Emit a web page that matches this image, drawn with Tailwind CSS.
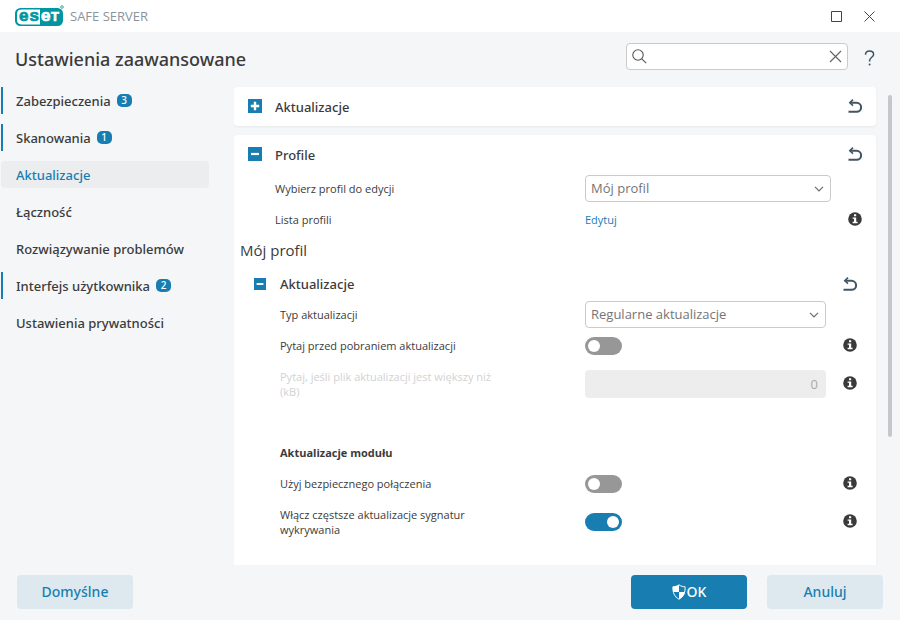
<!DOCTYPE html>
<html lang="pl">

<head>
    <meta charset="UTF-8">
    <meta name="viewport" content="width=device-width, initial-scale=1.0">
    <title>Ustawienia zaawansowane</title>
    <script src="https://cdn.jsdelivr.net/npm/@tailwindcss/browser@4"></script>
</head>

<body class="flex h-screen flex-col overflow-hidden bg-[#f4f6f8] font-['Open_Sans','Noto_Sans',sans-serif] text-[11px] text-[#3b3b3b]">
    <!-- Shared icons -->
    <svg class="hidden">
        <symbol id="icon-undo" viewBox="0 0 14 14">
            <path d="M2 3.8H8.6A4.5 4.5 0 0 1 8.6 12.8H.5" fill="none" stroke="#425563" stroke-width="2" />
            <path d="M5 .6 1.8 3.8 5 6.6" fill="none" stroke="#425563" stroke-width="1.6" />
        </symbol>
        <symbol id="icon-info" viewBox="0 0 14 14">
            <circle cx="7" cy="7" r="6.8" fill="#3a3a3a" />
            <path d="M6 2.2h2.2v2H6zM4.6 5.4h3.6v4.4h1.4v1.4H4.6V9.8H6V6.8H4.6z" fill="#fff" />
        </symbol>
        <symbol id="icon-minus" viewBox="0 0 14 14">
            <path d="M0 0h14v14H0z" fill="#187eb1" />
            <path d="M3 7h8" stroke="#fff" stroke-width="2.2" />
        </symbol>
        <symbol id="icon-plus" viewBox="0 0 14 14">
            <path d="M0 0h14v14H0z" fill="#187eb1" />
            <path d="M2.8 7h8.4M7 2.8v8.4" stroke="#fff" stroke-width="2.4" />
        </symbol>
        <symbol id="icon-chevron" viewBox="0 0 10 6">
            <path d="M1 .8 5 4.8 9 .8" fill="none" stroke="#6a6a6a" stroke-width="1.2" />
        </symbol>
    </svg>

    <!-- Title bar -->
    <div class="flex h-8 shrink-0 items-center bg-white pl-[14px] pr-[25px]">
        <svg class="h-[22px] w-[52px]" viewBox="0 0 52 22">
            <rect x="1" y="3" width="48" height="18" rx="5.5" fill="#0096a1" />
            <path d="M26 4.6H7.5Q3 4.6 3 9v6q0 4.4 4.5 4.4H26z" fill="#fff" />
            <g font-family="Liberation Sans" font-weight="700" font-size="17" stroke-width=".7">
                <text x="5" y="16.4" fill="#0096a1" stroke="#0096a1">e</text>
                <text x="15.5" y="16.4" fill="#0096a1" stroke="#0096a1">s</text>
                <text x="27" y="16.4" fill="#fff" stroke="#fff">e</text>
                <text x="37" y="16.4" font-size="13" fill="#fff" stroke="#fff">T</text>
            </g>
            <circle cx="48" cy="2" r="1.3" fill="none" stroke="#0096a1" stroke-width=".8" />
        </svg>
        <span class="ml-1 pt-0.5 text-[13px] text-[#8a949c]">SAFE SERVER</span>
        <button type="button" aria-label="Maksymalizuj" class="ml-auto">
            <svg class="size-[11px]" viewBox="0 0 11 11"><path d="M.5 .5h10v10H.5z" fill="none" stroke="#444" /></svg>
        </button>
        <button type="button" aria-label="Zamknij" class="ml-[22px]">
            <svg class="size-[11px]" viewBox="0 0 11 11"><path d="M.5 .5l10 10M10.5 .5l-10 10" fill="none" stroke="#444" /></svg>
        </button>
    </div>

    <!-- Page heading and search -->
    <header class="flex h-[55px] shrink-0 items-center pl-[15px] pr-[25px]">
        <h1 class="mb-0.5 font-['Noto_Sans',sans-serif] text-lg font-medium">Ustawienia zaawansowane</h1>
        <div class="mb-[7px] ml-auto flex h-[27px] w-[222px] items-center rounded border border-[#c8cacc] bg-white px-[5px]">
            <svg class="size-[15px] shrink-0" viewBox="0 0 15 15">
                <circle cx="6" cy="6" r="5.2" fill="none" stroke="#555" stroke-width="1.1" />
                <path d="M9.8 9.8l4.4 4.4" stroke="#555" stroke-width="1.1" />
            </svg>
            <input type="text" aria-label="Szukaj" class="min-w-0 flex-1 px-2 text-[13px] outline-none">
            <button type="button" aria-label="Wyczyść">
                <svg class="size-[13px]" viewBox="0 0 13 13"><path d="M1 1l11 11M12 1L1 12" stroke="#666" stroke-width="1.2" /></svg>
            </button>
        </div>
        <button type="button" aria-label="Pomoc" class="mb-1 ml-4">
            <svg class="h-4 w-[11px]" viewBox="0 0 11 16">
                <path d="M1.5 4.8C1.5 2.4 3.1 1 5.5 1S9.6 2.4 9.6 4.4C9.6 7.2 5.6 7.4 5.6 10.6V11.4" fill="none" stroke="#425563" stroke-width="1.5" />
                <circle cx="5.6" cy="14.6" r="1" fill="#425563" />
            </svg>
        </button>
    </header>

    <div class="flex min-h-0 flex-1">
        <!-- Navigation -->
        <nav class="flex w-[234px] shrink-0 flex-col gap-[10px] pl-px pr-[25px] font-['Noto_Sans',sans-serif] text-[13px] font-medium">
            <a href="#" class="flex h-[27px] items-center gap-[6px] border-l-2 border-[#187eb1] pl-[13px] pt-0.5">Zabezpieczenia <span class="mb-0.5 flex h-[13px] w-[15px] items-center justify-center rounded-[5px] bg-[#187eb1] text-[10px] text-white">3</span></a>
            <a href="#" class="flex h-[27px] items-center gap-[6px] border-l-2 border-[#187eb1] pl-[13px] pt-0.5">Skanowania <span class="mb-0.5 flex h-[13px] w-[15px] items-center justify-center rounded-[5px] bg-[#187eb1] text-[10px] text-white">1</span></a>
            <a href="#" class="flex h-[27px] items-center rounded bg-[#ebedef] pl-[15px] pt-0.5 text-[#187eb1]">Aktualizacje</a>
            <a href="#" class="flex h-[27px] items-center pl-[15px] pt-0.5">Łączność</a>
            <a href="#" class="flex h-[27px] items-center pl-[15px] pt-0.5">Rozwiązywanie problemów</a>
            <a href="#" class="flex h-[27px] items-center gap-[6px] border-l-2 border-[#187eb1] pl-[13px] pt-0.5">Interfejs użytkownika <span class="mb-0.5 flex h-[13px] w-[15px] items-center justify-center rounded-[5px] bg-[#187eb1] text-[10px] text-white">2</span></a>
            <a href="#" class="flex h-[27px] items-center pl-[15px] pt-0.5">Ustawienia prywatności</a>
        </nav>

        <!-- Settings -->
        <main class="flex min-w-0 flex-1 flex-col gap-[9px] overflow-hidden pr-3">
            <section class="grid h-[39px] shrink-0 grid-cols-[27px_1fr_auto] items-center rounded bg-white px-[14px] shadow-sm shadow-black/5">
                <button type="button" aria-label="Rozwiń" class="mb-0.5"><svg class="size-[14px]"><use href="#icon-plus" /></svg></button>
                <h2 class="pt-0.5 font-['Noto_Sans',sans-serif] text-[13px] font-medium">Aktualizacje</h2>
                <button type="button" aria-label="Przywróć" class="mb-0.5"><svg class="size-[14px]"><use href="#icon-undo" /></svg></button>
            </section>

            <section class="flex-1 rounded-t bg-white leading-[15px] shadow-sm shadow-black/5">
                <div class="grid grid-cols-[27px_310px_1fr_31px] items-center px-[14px]">
                    <button type="button" aria-label="Zwiń" class="h-[38px]"><svg class="size-[14px]"><use href="#icon-minus" /></svg></button>
                    <h2 class="col-span-2 pt-0.5 font-['Noto_Sans',sans-serif] text-[13px] font-medium">Profile</h2>
                    <button type="button" aria-label="Przywróć" class="justify-self-end"><svg class="size-[14px]"><use href="#icon-undo" /></svg></button>

                    <label for="profile" class="col-start-2">Wybierz profil do edycji</label>
                    <div class="relative flex h-[31px] items-center">
                        <select id="profile" class="h-[27px] w-full appearance-none rounded border border-[#c8cacc] bg-white px-[5px] text-[13px] text-[#757575]">
                            <option>Mój profil</option>
                        </select>
                        <svg class="pointer-events-none absolute right-[7px] h-[6px] w-[10px]"><use href="#icon-chevron" /></svg>
                    </div>

                    <span class="col-start-2">Lista profili</span>
                    <a href="#" class="flex h-[31px] items-center text-[#187eb1]">Edytuj</a>
                    <button type="button" aria-label="Informacje" class="mb-0.5 justify-self-end"><svg class="size-[14px]"><use href="#icon-info" /></svg></button>
                </div>

                <h3 class="flex h-[33px] items-center pb-0.5 pl-[6px] text-[15px]">Mój profil</h3>

                <div class="grid grid-cols-[26px_305px_1fr_31px] items-center pl-5 pr-[19px]">
                    <button type="button" aria-label="Zwiń" class="h-[31px]"><svg class="size-3"><use href="#icon-minus" /></svg></button>
                    <h4 class="col-span-2 pt-0.5 font-['Noto_Sans',sans-serif] text-[13px] font-medium">Aktualizacje</h4>
                    <button type="button" aria-label="Przywróć" class="justify-self-end"><svg class="size-[14px]"><use href="#icon-undo" /></svg></button>

                    <label for="update-type" class="col-start-2">Typ aktualizacji</label>
                    <div class="relative flex h-[31px] items-center">
                        <select id="update-type" class="h-[27px] w-full appearance-none rounded border border-[#c8cacc] bg-white px-[5px] text-[13px] text-[#757575]">
                            <option>Regularne aktualizacje</option>
                        </select>
                        <svg class="pointer-events-none absolute right-[7px] h-[6px] w-[10px]"><use href="#icon-chevron" /></svg>
                    </div>

                    <label for="ask" class="col-start-2 flex h-[31px] items-center">Pytaj przed pobraniem aktualizacji</label>
                    <input id="ask" type="checkbox" class="flex h-[18px] w-[37px] appearance-none items-center rounded-full bg-[#979797] px-[3px] before:size-3 before:rounded-full before:bg-white checked:justify-end checked:bg-[#187eb1]">
                    <button type="button" aria-label="Informacje" class="mb-0.5 justify-self-end"><svg class="size-[14px]"><use href="#icon-info" /></svg></button>

                    <label for="ask-size" class="col-start-2 flex h-[46px] max-w-[225px] items-center text-[#d2d2d2]">Pytaj, jeśli plik aktualizacji jest większy niż (kB)</label>
                    <input id="ask-size" type="text" value="0" disabled class="h-7 w-full rounded bg-[#ededed] px-2 text-right text-[13px] text-[#a9a9a9]">
                    <button type="button" aria-label="Informacje" class="mb-0.5 justify-self-end"><svg class="size-[14px]"><use href="#icon-info" /></svg></button>

                    <h5 class="col-span-2 col-start-2 mt-[30px] flex h-[31px] items-center font-bold">Aktualizacje modułu</h5>

                    <label for="secure" class="col-start-2 flex h-[31px] items-center">Użyj bezpiecznego połączenia</label>
                    <input id="secure" type="checkbox" class="flex h-[18px] w-[37px] appearance-none items-center rounded-full bg-[#979797] px-[3px] before:size-3 before:rounded-full before:bg-white checked:justify-end checked:bg-[#187eb1]">
                    <button type="button" aria-label="Informacje" class="mb-0.5 justify-self-end"><svg class="size-[14px]"><use href="#icon-info" /></svg></button>

                    <label for="frequent" class="col-start-2 flex h-[46px] max-w-[225px] items-center">Włącz częstsze aktualizacje sygnatur wykrywania</label>
                    <input id="frequent" type="checkbox" checked class="flex h-[18px] w-[37px] appearance-none items-center rounded-full bg-[#979797] px-[3px] before:size-3 before:rounded-full before:bg-white checked:justify-end checked:bg-[#187eb1]">
                    <button type="button" aria-label="Informacje" class="mb-0.5 justify-self-end"><svg class="size-[14px]"><use href="#icon-info" /></svg></button>
                </div>
            </section>
        </main>

        <!-- Scroll thumb -->
        <div class="w-3 shrink-0 pt-2">
            <div class="h-[342px] w-1 rounded-full bg-[#c5c8ca]"></div>
        </div>
    </div>

    <!-- Actions -->
    <footer class="flex h-[55px] shrink-0 items-start gap-5 px-[17px] pt-[10px] font-['Noto_Sans',sans-serif] text-sm font-medium">
        <button type="button" class="mr-auto h-[34px] w-[116px] rounded bg-[#dee9ef] text-[#187eb1]">Domyślne</button>
        <button type="button" class="flex h-[34px] w-[116px] items-center justify-center gap-px rounded bg-[#187eb1] text-white">
            <svg class="h-4 w-[14px]" viewBox="0 0 14 16">
                <path d="M7 .8C5.2 2.2 3 2.7.9 2.8.7 8.6 2.4 12.8 7 15.2 11.6 12.8 13.3 8.6 13.1 2.8 11 2.7 8.8 2.2 7 .8z" fill="none" stroke="#fff" />
                <path d="M7 .8C5.2 2.2 3 2.7.9 2.8L1.1 8H7zM7 8v7.2C10.4 13.4 12.3 11 12.9 8z" fill="#fff" />
            </svg>
            OK
        </button>
        <button type="button" class="h-[34px] w-[116px] rounded bg-[#dee9ef] text-[#187eb1]">Anuluj</button>
    </footer>
</body>

</html>
